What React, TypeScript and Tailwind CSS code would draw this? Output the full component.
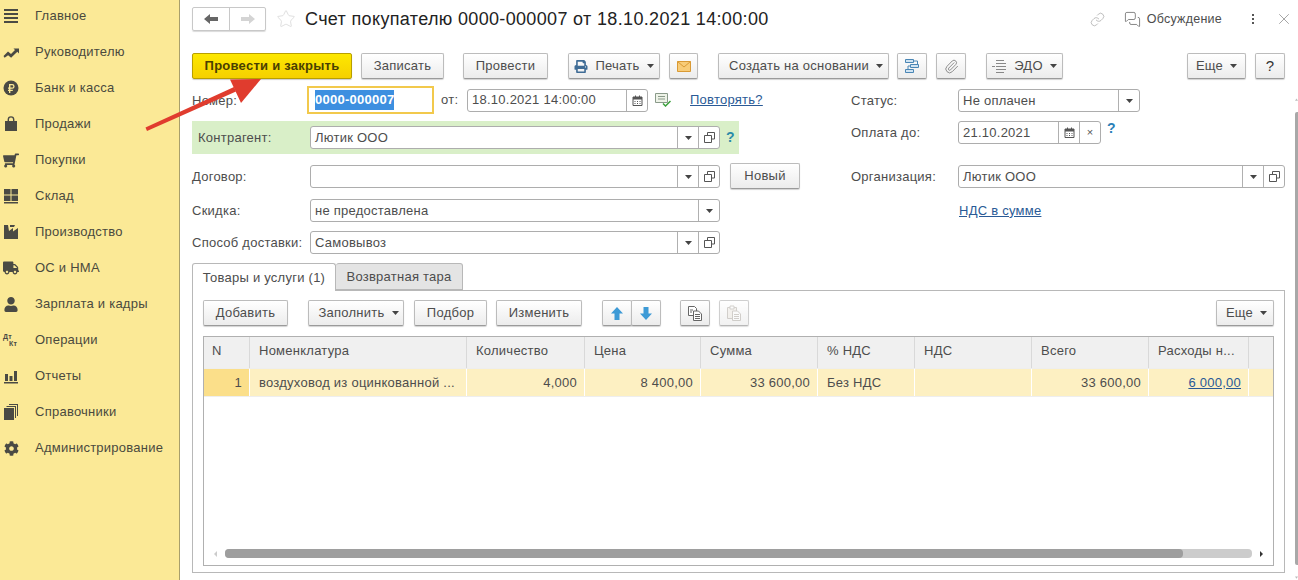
import type { ReactNode } from "react";
import { Link, MessagesSquare, Paperclip, Star, X } from "lucide-react";
import { FaCog, FaPrint, FaShoppingCart, FaTruck, FaUser } from "react-icons/fa";

const Ico = ({ children }: { children: ReactNode }) => (
  <svg viewBox="0 0 16 16" className="h-[16px] w-[16px]" fill="#4a4a44">
    {children}
  </svg>
);

const menu: { label: string; icon: ReactNode }[] = [
  {
    label: "Главное",
    icon: (
      <Ico>
        <path d="M1 1h14v2H1zM1 5h14v2H1zM1 9h14v2H1zM1 13h14v2H1z" />
      </Ico>
    ),
  },
  {
    label: "Руководителю",
    icon: (
      <Ico>
        <path d="M0.5 12l4.5-4.5 3 2.5 4-4-1.500-1.500H16v5l-1.700-1.700-6.200 6-3-2.600-3.500 2.600z" />
      </Ico>
    ),
  },
  {
    label: "Банк и касса",
    icon: (
      <Ico>
        <circle cx="8" cy="8" r="7.5" />
        <path d="M6 4h3.200a2.400 2.400 0 010 4.800H7.400v.9h2.400v1.200H7.400V13H6v-2.100H5v-1.200h1v-.9H5V7.600h1zm1.400 1.200v2.400h1.700a1.200 1.200 0 000-2.400z" fill="#fbe996" />
      </Ico>
    ),
  },
  {
    label: "Продажи",
    icon: (
      <Ico>
        <path d="M2 5h2.600V3.600a3.400 3.400 0 016.800 0V5H14v10H2zM6 5h4V3.600a2 2 0 00-4 0z" fillRule="evenodd" />
      </Ico>
    ),
  },
  { label: "Покупки", icon: <FaShoppingCart className="h-[15px] w-[16px] -scale-x-100 text-[#4a4a44]" /> },
  {
    label: "Склад",
    icon: (
      <Ico>
        <path d="M1 1h6.500v5.500H1zM8.500 1H15v5.500H8.500zM1 7.500h6.500V13H1zM8.500 7.500H15V13H8.500zM1 14h14v1.600H1z" />
      </Ico>
    ),
  },
  {
    label: "Производство",
    icon: (
      <Ico>
        <path d="M1 1h4l1 6 4-3v3.500L15 4v11H1zM7 1h5l-1 2H7z" />
      </Ico>
    ),
  },
  { label: "ОС и НМА", icon: <FaTruck className="h-[14px] w-[16px] text-[#4a4a44]" /> },
  { label: "Зарплата и кадры", icon: <FaUser className="ml-px h-[15px] w-[14px] text-[#4a4a44]" /> },
  {
    label: "Операции",
    icon: (
      <span className="flex w-[16px] flex-col text-[7px] font-bold leading-[7px] text-[#4a4a44]">
        <span>Дт</span>
        <span className="ml-[6px]">Кт</span>
      </span>
    ),
  },
  {
    label: "Отчеты",
    icon: (
      <Ico>
        <path d="M2 6h3v7H2zM6.500 8h3v5h-3zM11 3h3v10h-3zM1 14h14v1.500H1z" />
      </Ico>
    ),
  },
  {
    label: "Справочники",
    icon: (
      <Ico>
        <path d="M1 4h10v12H1zM3.500 2H13v12h-1V3H3.500zM6 0h9v12h-1V1H6z" />
      </Ico>
    ),
  },
  { label: "Администрирование", icon: <FaCog className="ml-px h-[15px] w-[15px] text-[#4a4a44]" /> },
];

const Caret = () => (
  <svg viewBox="0 0 7 4" className="h-[4px] w-[7px] shrink-0" fill="#444">
    <path d="M0 0h7L3.500 4z" />
  </svg>
);

const Btn = ({ className = "", children }: { className?: string; children: ReactNode }) => (
  <div
    className={`flex h-[26px] shrink-0 items-center justify-center gap-[7px] rounded-[2px] border border-[#bcbcbc] border-b-[#9a9a9a] bg-gradient-to-b from-white to-[#ececec] text-[#4d4d4d] shadow-[0_1px_1px_rgba(0,0,0,0.18)] ${className}`}
  >
    {children}
  </div>
);

const CalIcon = () => (
  <svg viewBox="0 0 11 11" className="h-[11px] w-[11px]">
    <path d="M1 2h9v8.500H1z" fill="none" stroke="#555" />
    <path d="M1 2h9v2.500H1zM3 0.500h1v2H3zM7 0.500h1v2H7z" fill="#555" />
    <path d="M2.500 6h1v1h-1zM5 6h1v1H5zM7.500 6h1v1h-1zM2.500 8h1v1h-1zM5 8h1v1H5zM7.500 8h1v1h-1z" fill="#555" />
  </svg>
);

const OpenIcon = () => (
  <svg viewBox="0 0 11 11" className="h-[11px] w-[11px]" fill="none" stroke="#555">
    <path d="M3.500 3.500v-3h7v6.500h-3" />
    <path d="M0.500 3.500h7v7h-7z" />
  </svg>
);

const Seg = ({ children }: { children: ReactNode }) => (
  <div className="flex w-[21px] shrink-0 items-center justify-center self-stretch border-l border-[#b0b0b0]">{children}</div>
);

const Field = ({
  value,
  className = "",
  drop = false,
  open = false,
  cal = false,
  clear = false,
}: {
  value?: string;
  className?: string;
  drop?: boolean;
  open?: boolean;
  cal?: boolean;
  clear?: boolean;
}) => (
  <div className={`flex h-[23px] shrink-0 items-center rounded-[3px] border border-[#adadad] bg-white text-[#4d4d4d] ${className}`}>
    <span className="flex-1 truncate pl-[4px]">{value}</span>
    {drop && (
      <Seg>
        <Caret />
      </Seg>
    )}
    {open && (
      <Seg>
        <OpenIcon />
      </Seg>
    )}
    {cal && (
      <Seg>
        <CalIcon />
      </Seg>
    )}
    {clear && (
      <Seg>
        <span className="text-[11px] leading-none text-[#555]">×</span>
      </Seg>
    )}
  </div>
);

const columns = ["N", "Номенклатура", "Количество", "Цена", "Сумма", "% НДС", "НДС", "Всего", "Расходы н...", ""];
const row = ["1", "воздуховод из оцинкованной ...", "4,000", "8 400,00", "33 600,00", "Без НДС", "", "33 600,00", "6 000,00", ""];
const rightAligned = [0, 2, 3, 4, 7, 8];

const gridCols = "grid-cols-[46px_217px_118px_116px_117px_97px_117px_117px_100px_1fr]";

const CopyIcon = () => (
  <svg viewBox="0 0 16 16" className="h-[16px] w-[16px]" fill="#fff" stroke="#666">
    <path d="M1.500 1.500h6l2 2v7h-8z" />
    <path d="M6.500 6h5l3 3v6.500h-8z" />
    <path d="M8 9.500h5M8 11.500h5M8 13.500h5M3 5h3M3 7h2" fill="none" />
  </svg>
);

const PasteIcon = () => (
  <svg viewBox="0 0 16 16" className="h-[16px] w-[16px] opacity-50" fill="#fff" stroke="#8a8278">
    <path d="M1.500 2.500h9v11h-9z" fill="#e8e2d8" />
    <path d="M4 1h4v3H4z" />
    <path d="M6.500 6h5l3 3v6.500h-8z" />
    <path d="M8 9.500h5M8 11.500h5M8 13.500h5" fill="none" />
  </svg>
);

export default function App() {
  return (
    <div className="relative flex h-[580px] w-[1298px] overflow-hidden bg-white font-['Liberation_Sans',Arial,sans-serif] text-[13px] tracking-[0.25px] text-[#4d4d4d]">
      <aside className="h-full w-[180px] shrink-0 border-r border-[#a89f6c] bg-[#fbe996]">
        <div className="-mt-[2px]">
          {menu.map((m) => (
            <div key={m.label} className="flex h-[36px] items-center text-[#4a4a3e]">
              <div className="flex w-[35px] pl-[3px]">{m.icon}</div>
              <span>{m.label}</span>
            </div>
          ))}
        </div>
      </aside>

      <main className="flex h-full min-w-0 flex-1 flex-col pl-[12px] pr-[10px] pt-[7px]">
        <header className="flex h-[24px] shrink-0 items-center">
          <div className="flex h-[24px] w-[74px] rounded-[2px] border border-[#c8c8c8] shadow-[0_1px_1px_rgba(0,0,0,0.15)]">
            <div className="flex flex-1 items-center justify-center border-r border-[#c8c8c8]">
              <svg viewBox="0 0 14 10" className="h-[10px] w-[14px]" fill="#666">
                <path d="M0 5l6-5v3h8v4H6v3z" />
              </svg>
            </div>
            <div className="flex w-[35px] items-center justify-center">
              <svg viewBox="0 0 14 10" className="h-[10px] w-[14px]" fill="#d4d4d4">
                <path d="M14 5L8 0v3H0v4h8v3z" />
              </svg>
            </div>
          </div>
          <Star className="ml-[10px] h-[20px] w-[20px] text-[#d8d8d8]" strokeWidth={1} />
          <h1 className="ml-[9px] text-[18px] font-normal tracking-[0.34px] text-[#222]">
            Счет покупателю 0000-000007 от 18.10.2021 14:00:00
          </h1>
          <div className="-mr-[8px] ml-auto flex items-center">
            <Link className="h-[15px] w-[15px] text-[#999]" strokeWidth={1} />
            <MessagesSquare className="ml-[19px] h-[17px] w-[17px] text-[#555]" strokeWidth={1} />
            <span className="ml-[6px] text-[12.5px]">Обсуждение</span>
            <span className="ml-[30px] flex flex-col gap-[2px]">
              <i className="h-[2px] w-[2px] bg-[#555]" />
              <i className="h-[2px] w-[2px] bg-[#555]" />
              <i className="h-[2px] w-[2px] bg-[#555]" />
            </span>
            <X className="ml-[21px] h-[18px] w-[18px] text-[#888]" strokeWidth={1} />
          </div>
        </header>

        <div className="mt-[22px] flex shrink-0 items-center">
          <div className="flex h-[26px] w-[160px] items-center justify-center rounded-[2px] border border-[#b89f00] bg-gradient-to-b from-[#fde800] to-[#f5d000] font-bold text-[#4a3f00] shadow-[0_1px_1px_rgba(0,0,0,0.2)]">
            Провести и закрыть
          </div>
          <Btn className="ml-[9px] w-[83px]">Записать</Btn>
          <Btn className="ml-[19px] w-[85px]">Провести</Btn>
          <Btn className="ml-[20px] w-[92px]">
            <FaPrint className="h-[13px] w-[14px] text-[#3f6c96]" />
            Печать
            <Caret />
          </Btn>
          <Btn className="ml-[9px] w-[29px]">
            <svg viewBox="0 0 14 11" className="h-[11px] w-[14px]">
              <path d="M0.500 0.500h13v10h-13z" fill="#f8cc78" stroke="#d99a35" />
              <path d="M0.500 0.500L7 6l6.500-5.500" fill="none" stroke="#d99a35" />
            </svg>
          </Btn>
          <Btn className="ml-[20px] w-[171px] pl-[5px]">
            Создать на основании
            <Caret />
          </Btn>
          <Btn className="ml-[8px] w-[30px]">
            <svg viewBox="0 0 14 14" className="h-[14px] w-[14px]" fill="#cfe3f2" stroke="#4a86b5">
              <path d="M0.500 0.500h8v3h-8zM5.500 5.500h8v3h-8zM0.500 10.500h8v3h-8z" />
              <path d="M8.500 2h4v3.500M5.500 7H3v3.500" fill="none" />
            </svg>
          </Btn>
          <Btn className="ml-[9px] w-[30px]">
            <Paperclip className="h-[15px] w-[15px] text-[#888]" strokeWidth={1.5} />
          </Btn>
          <Btn className="ml-[20px] w-[77px] gap-[6px]">
            <svg viewBox="0 0 15 13" className="h-[13px] w-[15px]" fill="none" stroke="#888">
              <path d="M4 0.500h8M4 3.500h10M4 6.500h10M4 9.500h10M4 12.500h8" />
              <path d="M0 6.500h3" />
            </svg>
            ЭДО
            <Caret />
          </Btn>
          <Btn className="ml-auto w-[59px]">
            Еще
            <Caret />
          </Btn>
          <Btn className="ml-[9px] w-[30px] text-[15px] text-[#333]">?</Btn>
        </div>

        <div className="mt-[7px] flex shrink-0">
          <div className="w-[659px] shrink-0">
            <div className="flex h-[28px] items-center">
              <span className="w-[115px] pt-px">Номер:</span>
              <div className="flex h-[28px] w-[127px] items-center border-2 border-[#f2c94c] pl-[6px]">
                <span className="bg-[#3d8fe0] font-bold text-white">0000-000007</span>
              </div>
              <span className="w-[33px] pl-[7px]">от:</span>
              <Field value="18.10.2021 14:00:00" className="w-[181px]" cal />
              <svg viewBox="0 0 16 14" className="ml-[7px] h-[14px] w-[16px] shrink-0" fill="none">
                <path d="M0.500 0.500h12v9h-12z" fill="#eef3e8" stroke="#8a9a8a" />
                <path d="M3 3.500h7M3 6h7" stroke="#8a9a8a" />
                <path d="M8 10.500l2.500 2.500 5-5" stroke="#3aa03a" strokeWidth="1.500" />
              </svg>
              <span className="ml-[19px] text-[#2a5a96] underline">Повторять?</span>
            </div>

            <div className="mt-[7px] flex h-[33px] w-[547px] items-center bg-[#d9efc8] pl-[6px]">
              <span className="w-[112px]">Контрагент:</span>
              <Field value="Лютик ООО" className="w-[410px]" drop open />
              <span className="ml-[6px] text-[14px] font-bold text-[#2b8aa8]">?</span>
            </div>

            <div className="mt-[11px] flex h-[23px] items-center">
              <span className="w-[118px]">Договор:</span>
              <Field className="w-[410px]" drop open />
              <Btn className="-mt-[2px] ml-[10px] w-[70px] self-start">Новый</Btn>
            </div>

            <div className="mt-[11px] flex h-[23px] items-center">
              <span className="w-[118px]">Скидка:</span>
              <Field value="не предоставлена" className="w-[410px]" drop />
            </div>

            <div className="mt-[9px] flex h-[23px] items-center">
              <span className="w-[118px]">Способ доставки:</span>
              <Field value="Самовывоз" className="w-[410px]" drop open />
            </div>
          </div>

          <div className="min-w-0 flex-1 pt-[3px]">
            <div className="flex h-[23px] items-center">
              <span className="w-[107px]">Статус:</span>
              <Field value="Не оплачен" className="w-[182px]" drop />
            </div>
            <div className="mt-[9px] flex h-[23px] items-center">
              <span className="w-[107px]">Оплата до:</span>
              <Field value="21.10.2021" className="w-[143px]" cal clear />
              <span className="mb-[8px] ml-[6px] text-[14px] font-bold text-[#2b7fb8]">?</span>
            </div>
            <div className="mt-[21px] flex h-[23px] items-center">
              <span className="w-[107px]">Организация:</span>
              <Field value="Лютик ООО" className="w-[327px]" drop open />
            </div>
            <div className="mt-[11px] flex h-[23px] items-center pl-[108px]">
              <span className="text-[#2a5a96] underline">НДС в сумме</span>
            </div>
          </div>
        </div>

        <div className="mt-[9px] flex h-[28px] shrink-0">
          <div className="relative z-10 flex h-[28px] w-[144px] items-center justify-center rounded-t-[3px] border border-b-0 border-[#b8b8b8] bg-white">
            Товары и услуги (1)
          </div>
          <div className="flex h-[27px] w-[127px] items-center justify-center rounded-t-[3px] border border-l-0 border-[#b8b8b8] bg-[#e4e4e4]">
            Возвратная тара
          </div>
        </div>

        <section className="-mt-px flex h-[283px] shrink-0 flex-col border border-[#b8b8b8] px-[10px] pb-[6px] pt-[9px]">
          <div className="flex shrink-0 items-center">
            <Btn className="w-[85px]">Добавить</Btn>
            <Btn className="ml-[20px] w-[96px] pl-[5px]">
              Заполнить
              <Caret />
            </Btn>
            <Btn className="ml-[10px] w-[73px]">Подбор</Btn>
            <Btn className="ml-[9px] w-[86px]">Изменить</Btn>
            <Btn className="ml-[20px] w-[30px]">
              <svg viewBox="0 0 12 13" className="h-[13px] w-[12px]" fill="#3d9ad6">
                <path d="M6 0l6 6.500H8.500V13h-5V6.500H0z" />
              </svg>
            </Btn>
            <Btn className="-ml-px w-[30px]">
              <svg viewBox="0 0 12 13" className="h-[13px] w-[12px]" fill="#3d9ad6">
                <path d="M6 13l6-6.500H8.500V0h-5v6.500H0z" />
              </svg>
            </Btn>
            <Btn className="ml-[19px] w-[30px]">
              <CopyIcon />
            </Btn>
            <Btn className="ml-[9px] w-[30px] opacity-70">
              <PasteIcon />
            </Btn>
            <Btn className="ml-auto w-[58px] pl-[3px]">
              Еще
              <Caret />
            </Btn>
          </div>

          <div className="mt-[10px] flex min-h-0 flex-1 flex-col border border-[#b0b0b0]">
            <div className={`grid h-[31px] shrink-0 ${gridCols} bg-[#f0f0f0]`}>
              {columns.map((c, i) => (
                <div
                  key={i}
                  className={`flex items-center overflow-hidden whitespace-nowrap border-r border-[#d9d9d9] pb-[3px] last:border-r-0 ${
                    i === 0 ? "pl-[8px]" : "pl-[9px]"
                  }`}
                >
                  {c}
                </div>
              ))}
            </div>
            <div className={`grid h-[29px] shrink-0 ${gridCols} border-y border-[#eeeeee] bg-[#fdf0c2]`}>
              {row.map((c, i) => (
                <div
                  key={i}
                  className={`flex items-center overflow-hidden whitespace-nowrap border-r border-white pl-[9px] pr-[7px] last:border-r-0 ${
                    rightAligned.includes(i) ? "justify-end" : ""
                  } ${i === 0 ? "bg-[#fbdf8a]" : ""} ${i === 8 ? "text-[#2a5a96] underline" : ""}`}
                >
                  {c}
                </div>
              ))}
            </div>
            <div className="mb-[7px] mt-auto flex h-[9px] shrink-0 items-center px-[10px]">
              <svg viewBox="0 0 3 6" className="h-[6px] w-[3px]" fill="#ccc">
                <path d="M3 0v6L0 3z" />
              </svg>
              <div className="ml-[8px] flex h-[9px] flex-1 rounded-[4px] bg-[#cccccc]">
                <div className="w-[958px] rounded-[4px] bg-[#9e9e9e]" />
              </div>
              <svg viewBox="0 0 3 6" className="ml-[8px] h-[6px] w-[3px]" fill="#333">
                <path d="M0 0v6l3-3z" />
              </svg>
            </div>
          </div>
        </section>
      </main>

      <div className="flex h-full w-[3px] shrink-0 flex-col items-center pt-[98px]">
        <svg viewBox="0 0 4 3" className="h-[3px] w-[3px] shrink-0" fill="#bbb">
          <path d="M2 0l2 3H0z" />
        </svg>
        <div className="mt-[11px] h-[453px] w-[3px] shrink-0 rounded-l-[2px] bg-[#a8a8a8]" />
        <svg viewBox="0 0 4 3" className="mt-[11px] h-[3px] w-[3px] shrink-0" fill="#bbb">
          <path d="M2 3l2-3H0z" />
        </svg>
      </div>

      <svg viewBox="0 0 130 62" className="pointer-events-none absolute left-[140px] top-[75px] h-[62px] w-[130px]" fill="#e03c2e">
        <path d="M7 56l-1.500-3.500L94 12l2 4.500z" />
        <path d="M90 4.500l31-.5-20 24z" />
      </svg>
    </div>
  );
}
